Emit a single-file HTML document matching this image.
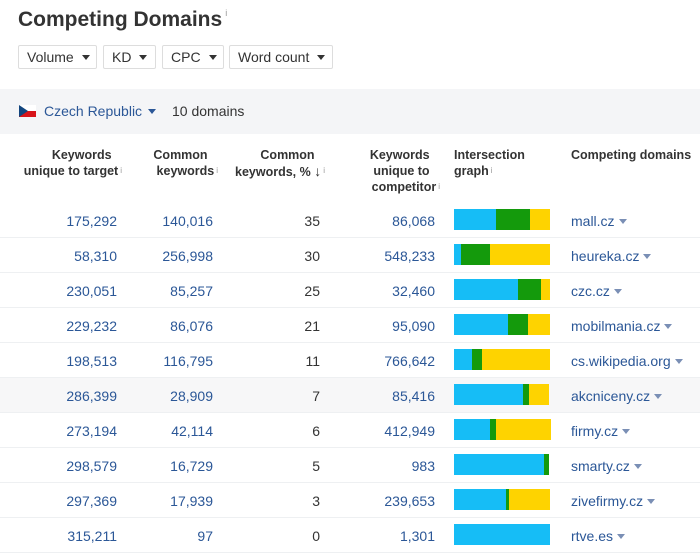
<!DOCTYPE html>
<html><head><meta charset="utf-8"><style>
*{margin:0;padding:0;box-sizing:border-box}
body{width:700px;height:560px;background:#fff;font-family:"Liberation Sans",Arial,sans-serif;position:relative;overflow:hidden;color:#333}
h1{position:absolute;left:18px;top:8px;font-size:21px;font-weight:bold;color:#333}
h1 sup{font-size:9px;font-weight:normal;color:#999;vertical-align:top;margin-left:3px}
.btn{position:absolute;top:45px;height:24px;border:1px solid #ddd;border-radius:2px;font-size:14px;color:#333;padding:4px 8px;line-height:15px;white-space:nowrap}
.btn:after{content:"";display:inline-block;border-left:4px solid transparent;border-right:4px solid transparent;border-top:5px solid #333;margin-left:8px;vertical-align:2px}
.bar{position:absolute;left:0;top:89px;width:700px;height:45px;background:#f4f5f7}
.flag{position:absolute;left:19px;top:105px;width:17px;height:12px;background:linear-gradient(#fff 50%,#d7141a 50%)}
.flag:before{content:"";position:absolute;left:0;top:0;border-top:6px solid transparent;border-bottom:6px solid transparent;border-left:9px solid #11457e}
.cz{position:absolute;left:44px;top:103px;font-size:14px;color:#2b5797}
.cz:after{content:"";display:inline-block;border-left:4px solid transparent;border-right:4px solid transparent;border-top:5px solid #2b5797;margin-left:6px;vertical-align:2px}
.dom{position:absolute;left:172px;top:103px;font-size:14px;color:#333}
.th{position:absolute;font-size:12.5px;font-weight:bold;color:#333;line-height:16px;white-space:nowrap}
.th sup{font-size:8px;font-weight:normal;color:#999;vertical-align:top;margin-left:2px}
.r{position:absolute;left:0;width:700px;height:35px;border-bottom:1px solid #eef0f2}
.r span{position:absolute;top:10px;font-size:14px;color:#2b5797;text-align:right}
.r .n3{color:#333}
.r .g{position:absolute;top:6px;left:454px;height:21px;display:flex}
.r .d{left:571px;text-align:left}
.r .d:after{content:"";display:inline-block;border-left:4px solid transparent;border-right:4px solid transparent;border-top:5px solid #7a8fb5;margin-left:4px;vertical-align:2px}
.b{background:#16bdf6}.gr{background:#149a0c}.y{background:#fed300}
</style></head><body>
<h1>Competing Domains<sup>i</sup></h1>
<div class="btn" style="left:18px;width:79px">Volume</div>
<div class="btn" style="left:103px;width:53px">KD</div>
<div class="btn" style="left:162px;width:62px">CPC</div>
<div class="btn" style="left:229px;width:104px">Word count</div>
<div class="bar"></div>
<div class="flag"></div>
<div class="cz">Czech Republic</div>
<div class="dom">10 domains</div>
<div class="th" style="right:578px;top:147px;text-align:right">Keywords&nbsp;&nbsp;&nbsp;<br>unique to target<sup>i</sup></div>
<div class="th" style="right:482px;top:147px;text-align:right">Common&nbsp;&nbsp;&nbsp;<br>keywords<sup>i</sup></div>
<div class="th" style="right:375px;top:147px;text-align:right">Common&nbsp;&nbsp;&nbsp;<br>keywords, % <b style="font-size:14px">&darr;</b><sup>i</sup></div>
<div class="th" style="right:260px;top:147px;text-align:right">Keywords&nbsp;&nbsp;&nbsp;<br>unique to&nbsp;&nbsp;&nbsp;<br>competitor<sup>i</sup></div>
<div class="th" style="left:454px;top:147px">Intersection<br>graph<sup>i</sup></div>
<div class="th" style="left:571px;top:147px">Competing domains</div>
<div class="r" style="top:203px"><span style="right:583px">175,292</span><span style="right:487px">140,016</span><span class="n3" style="right:380px">35</span><span style="right:265px">86,068</span><div class="g"><i class="b" style="width:42px"></i><i class="gr" style="width:34px"></i><i class="y" style="width:20px"></i></div><span class="d">mall.cz</span></div>
<div class="r" style="top:238px"><span style="right:583px">58,310</span><span style="right:487px">256,998</span><span class="n3" style="right:380px">30</span><span style="right:265px">548,233</span><div class="g"><i class="b" style="width:7px"></i><i class="gr" style="width:29px"></i><i class="y" style="width:60px"></i></div><span class="d">heureka.cz</span></div>
<div class="r" style="top:273px"><span style="right:583px">230,051</span><span style="right:487px">85,257</span><span class="n3" style="right:380px">25</span><span style="right:265px">32,460</span><div class="g"><i class="b" style="width:64px"></i><i class="gr" style="width:23px"></i><i class="y" style="width:9px"></i></div><span class="d">czc.cz</span></div>
<div class="r" style="top:308px"><span style="right:583px">229,232</span><span style="right:487px">86,076</span><span class="n3" style="right:380px">21</span><span style="right:265px">95,090</span><div class="g"><i class="b" style="width:54px"></i><i class="gr" style="width:20px"></i><i class="y" style="width:22px"></i></div><span class="d">mobilmania.cz</span></div>
<div class="r" style="top:343px"><span style="right:583px">198,513</span><span style="right:487px">116,795</span><span class="n3" style="right:380px">11</span><span style="right:265px">766,642</span><div class="g"><i class="b" style="width:18px"></i><i class="gr" style="width:10px"></i><i class="y" style="width:68px"></i></div><span class="d">cs.wikipedia.org</span></div>
<div class="r" style="top:378px;background:#f7f7f8"><span style="right:583px">286,399</span><span style="right:487px">28,909</span><span class="n3" style="right:380px">7</span><span style="right:265px">85,416</span><div class="g"><i class="b" style="width:69px"></i><i class="gr" style="width:6px"></i><i class="y" style="width:20px"></i></div><span class="d">akcniceny.cz</span></div>
<div class="r" style="top:413px"><span style="right:583px">273,194</span><span style="right:487px">42,114</span><span class="n3" style="right:380px">6</span><span style="right:265px">412,949</span><div class="g"><i class="b" style="width:36px"></i><i class="gr" style="width:6px"></i><i class="y" style="width:55px"></i></div><span class="d">firmy.cz</span></div>
<div class="r" style="top:448px"><span style="right:583px">298,579</span><span style="right:487px">16,729</span><span class="n3" style="right:380px">5</span><span style="right:265px">983</span><div class="g"><i class="b" style="width:90px"></i><i class="gr" style="width:5px"></i></div><span class="d">smarty.cz</span></div>
<div class="r" style="top:483px"><span style="right:583px">297,369</span><span style="right:487px">17,939</span><span class="n3" style="right:380px">3</span><span style="right:265px">239,653</span><div class="g"><i class="b" style="width:52px"></i><i class="gr" style="width:3px"></i><i class="y" style="width:41px"></i></div><span class="d">zivefirmy.cz</span></div>
<div class="r" style="top:518px"><span style="right:583px">315,211</span><span style="right:487px">97</span><span class="n3" style="right:380px">0</span><span style="right:265px">1,301</span><div class="g"><i class="b" style="width:96px"></i></div><span class="d">rtve.es</span></div>
</body></html>
